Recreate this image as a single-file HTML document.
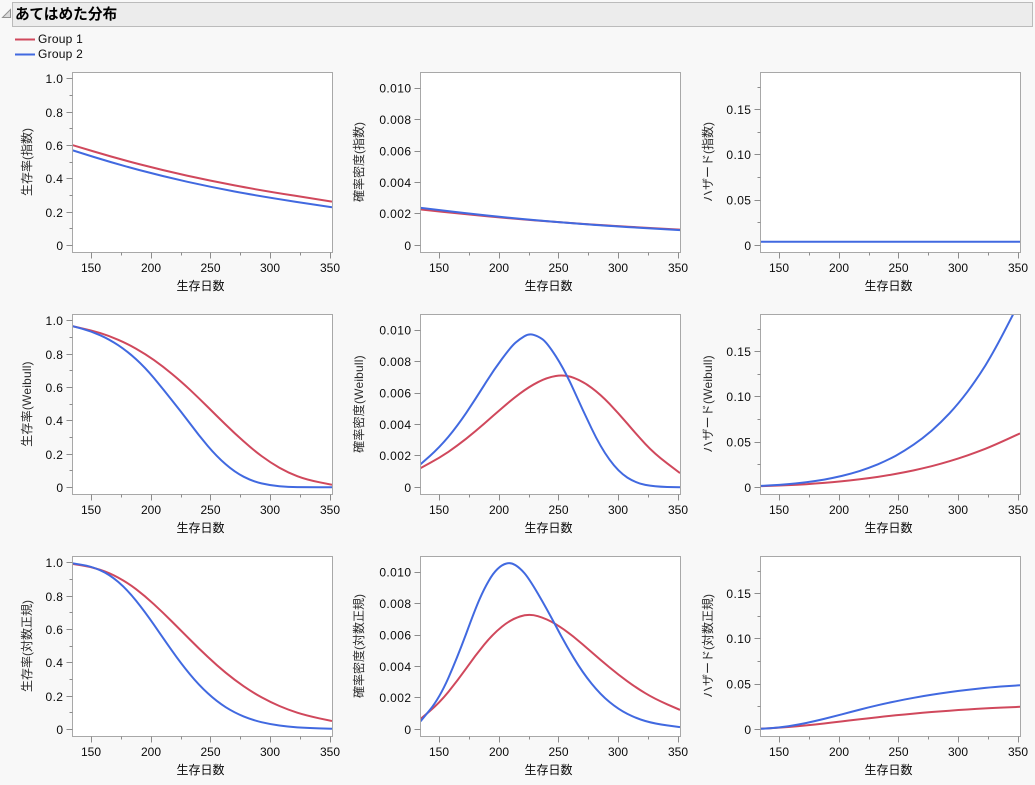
<!DOCTYPE html>
<html lang="ja">
<head>
<meta charset="utf-8">
<title>あてはめた分布</title>
<style>
html,body{margin:0;padding:0;background:#f8f8f8;}
body{width:1035px;height:785px;overflow:hidden;}
svg{display:block;font-family:"Liberation Sans","Noto Sans CJK JP",sans-serif;font-size:12px;fill:#0a0a0a;}
.r{fill:none;stroke:#d0485c;stroke-width:2;stroke-linejoin:round;}
.b{fill:none;stroke:#4169e0;stroke-width:2;stroke-linejoin:round;}
.f{fill:#fff;stroke:#a8a8a8;stroke-width:1;}
.t{stroke:#8c8c8c;stroke-width:1;fill:none;}
.y{text-anchor:end;letter-spacing:.4px;}
.x{text-anchor:middle;}
.v{text-anchor:middle;fill:#2a2a2a;}
.w{letter-spacing:.2px;}
.g{letter-spacing:.25px;}
</style>
</head>
<body>
<svg width="1035" height="785" viewBox="0 0 1035 785" xmlns="http://www.w3.org/2000/svg">
<defs>
<clipPath id="c"><rect x="73" y="73" width="259" height="179"/></clipPath>
<path id="xt" class="t" d="M91.5 252.5v6M151.5 252.5v6M210.5 252.5v6M270.5 252.5v6M330.5 252.5v6M121.5 252.5v3M181.5 252.5v3M240.5 252.5v3M300.5 252.5v3"/>
<path id="y1" class="t" d="M72.5 245.5h-6M72.5 212.5h-6M72.5 178.5h-6M72.5 145.5h-6M72.5 112.5h-6M72.5 78.5h-6M72.5 228.5h-3M72.5 195.5h-3M72.5 162.5h-3M72.5 128.5h-3M72.5 95.5h-3"/>
<path id="y2" class="t" d="M72.5 245.5h-6M72.5 213.5h-6M72.5 182.5h-6M72.5 151.5h-6M72.5 119.5h-6M72.5 88.5h-6"/>
<path id="y3" class="t" d="M72.5 245.5h-6M72.5 200.5h-6M72.5 154.5h-6M72.5 109.5h-6M72.5 222.5h-3M72.5 177.5h-3M72.5 132.5h-3M72.5 87.5h-3"/>
</defs>

<rect x="12.5" y="2.5" width="1020" height="24" fill="#ececec" stroke="#bbb" stroke-width="1"/>
<path d="M10.5 9.5V17.5H2.5Z" fill="#dcdcdc" stroke="#929292" stroke-width="1"/>
<text x="15" y="19" style="font-size:14.7px;font-weight:bold;" fill="#000">あてはめた分布</text>

<path d="M15 39.5H35" class="r"/>
<path d="M15 54.5H35" class="b"/>
<text class="g" x="38" y="43">Group 1</text>
<text class="g" x="38" y="58">Group 2</text>

<!-- Row 1 Col 1 -->
<g>
<rect class="f" x="72.5" y="72.5" width="260" height="180"/>
<use href="#xt"/><use href="#y1"/>
<g clip-path="url(#c)">
<path class="r" d="M72.5 145.1L93.9 151.5Q115.2 157.9 139.1 164.1Q163 170.3 186.9 175.6Q210.7 180.8 234.6 185.4Q258.5 190 295.3 195.8L332 201.6"/>
<path class="b" d="M72.5 150.3L93.9 157Q115.2 163.6 139.1 170Q163 176.3 186.9 181.7Q210.7 187 234.6 191.5Q258.5 196 295.3 201.7L332 207.3"/>
</g>
<text class="y" x="63.4" y="83">1.0</text><text class="y" x="63.4" y="117">0.8</text><text class="y" x="63.4" y="150">0.6</text><text class="y" x="63.4" y="183">0.4</text><text class="y" x="63.4" y="217">0.2</text><text class="y" x="63.4" y="250">0</text>
<text class="x" x="91" y="272">150</text><text class="x" x="151" y="272">200</text><text class="x" x="210.5" y="272">250</text><text class="x" x="270" y="272">300</text><text class="x" x="330" y="272">350</text>
<text class="x" x="200.5" y="290">生存日数</text>
<text class="v" transform="translate(31,162) rotate(-90)">生存率(指数)</text>
</g>

<!-- Row 1 Col 2 -->
<g transform="translate(348,0)">
<rect class="f" x="72.5" y="72.5" width="260" height="180"/>
<use href="#xt"/><use href="#y2"/>
<g clip-path="url(#c)">
<path class="r" d="M72.5 209.5L93.9 211.8Q115.2 214 139.1 216.3Q163 218.5 186.9 220.4Q210.7 222.2 234.6 223.9Q258.5 225.5 295.3 227.6L332 229.6"/>
<path class="b" d="M72.5 207.8L93.9 210.4Q115.2 213 139.1 215.5Q163 218 186.9 220.1Q210.7 222.2 234.6 224Q258.5 225.8 295.3 228L332 230.1"/>
</g>
<text class="y" x="63.4" y="92.5">0.010</text><text class="y" x="63.4" y="124">0.008</text><text class="y" x="63.4" y="155.5">0.006</text><text class="y" x="63.4" y="187">0.004</text><text class="y" x="63.4" y="218">0.002</text><text class="y" x="63.4" y="250">0</text>
<text class="x" x="91" y="272">150</text><text class="x" x="151" y="272">200</text><text class="x" x="210.5" y="272">250</text><text class="x" x="270" y="272">300</text><text class="x" x="330" y="272">350</text>
<text class="x" x="200.5" y="290">生存日数</text>
<text class="v" transform="translate(15,162) rotate(-90)">確率密度(指数)</text>
</g>

<!-- Row 1 Col 3 -->
<g transform="translate(688,0)">
<rect class="f" x="72.5" y="72.5" width="260" height="180"/>
<use href="#xt"/><use href="#y3"/>
<g clip-path="url(#c)">
<path class="b" d="M72.5 241.7H332"/>
</g>
<text class="y" x="63.4" y="114">0.15</text><text class="y" x="63.4" y="159">0.10</text><text class="y" x="63.4" y="204.5">0.05</text><text class="y" x="63.4" y="250">0</text>
<text class="x" x="91" y="272">150</text><text class="x" x="151" y="272">200</text><text class="x" x="210.5" y="272">250</text><text class="x" x="270" y="272">300</text><text class="x" x="330" y="272">350</text>
<text class="x" x="200.5" y="290">生存日数</text>
<text class="v" transform="translate(24,162) rotate(-90)">ハザード(指数)</text>
</g>

<!-- Row 2 Col 1 -->
<g transform="translate(0,242)">
<rect class="f" x="72.5" y="72.5" width="260" height="180"/>
<use href="#xt"/><use href="#y1"/>
<g clip-path="url(#c)">
<path class="r" d="M72.5 84.2L81.9 86.3Q91.3 88.3 100.3 91.1Q109.2 93.9 118.2 97.8Q127.1 101.6 136.1 106.7Q145 111.7 154 118.1Q162.9 124.4 171.9 131.9Q180.9 139.3 189.9 147.7Q198.8 156.1 207.8 165Q216.7 173.9 225.7 182.6Q234.6 191.3 243.6 199.3Q252.5 207.3 261.5 214Q270.4 220.6 279.4 225.7Q288.3 230.7 297.3 234.2Q306.2 237.6 319.1 240.2L332 242.8"/>
<path class="b" d="M72.5 84.1L81.9 86.7Q91.3 89.3 100.3 93.3Q109.2 97.3 118.2 103.2Q127.1 109.1 136.1 117.2Q145 125.3 154 136.1Q162.9 146.9 171.9 158.2Q180.9 169.4 189.9 181.4Q198.8 193.4 207.8 204Q216.7 214.5 225.7 222.3Q234.6 230.1 243.6 234.7Q252.5 239.3 261.5 241.4Q270.4 243.5 279.4 244.2Q288.3 244.9 297.3 245.1Q306.2 245.2 319.1 245.3L332 245.3"/>
</g>
<text class="y" x="63.4" y="83">1.0</text><text class="y" x="63.4" y="117">0.8</text><text class="y" x="63.4" y="150">0.6</text><text class="y" x="63.4" y="183">0.4</text><text class="y" x="63.4" y="217">0.2</text><text class="y" x="63.4" y="250">0</text>
<text class="x" x="91" y="272">150</text><text class="x" x="151" y="272">200</text><text class="x" x="210.5" y="272">250</text><text class="x" x="270" y="272">300</text><text class="x" x="330" y="272">350</text>
<text class="x" x="200.5" y="290">生存日数</text>
<text class="v w" transform="translate(31,162) rotate(-90)">生存率(Weibull)</text>
</g>

<!-- Row 2 Col 2 -->
<g transform="translate(348,242)">
<rect class="f" x="72.5" y="72.5" width="260" height="180"/>
<use href="#xt"/><use href="#y2"/>
<g clip-path="url(#c)">
<path class="r" d="M72.5 226.1L81.9 221Q91.3 215.9 100.3 209.9Q109.2 203.8 118.2 196.7Q127.1 189.5 136.1 181.7Q145 173.8 154 166.1Q162.9 158.3 171.9 151.6Q180.9 144.8 189.9 140.2Q198.8 135.5 207.8 134Q216.7 132.5 225.7 135.8Q234.6 139.1 243.6 145.8Q252.5 152.4 261.5 161.8Q270.4 171.2 279.4 181.7Q288.3 192.2 297.3 201.9Q306.2 211.5 319.1 221.3L332 231.1"/>
<path class="b" d="M72.5 222.3L81.9 214Q91.3 205.6 100.3 194.9Q109.2 184.1 118.2 170.9Q127.1 157.6 136.1 143.3Q145 129 154 116.9Q162.9 104.8 167.4 100.8Q171.9 96.8 176.4 94.2Q180.9 91.6 185.4 92.8Q189.9 94 194.4 97.2Q198.8 100.3 207.8 114.2Q216.7 128.1 225.7 148Q234.6 167.8 243.6 186.5Q252.5 205.2 261.5 217.6Q270.4 229.9 279.4 235.6Q288.3 241.2 297.3 242.9Q306.2 244.6 319.1 245L332 245.3"/>
</g>
<text class="y" x="63.4" y="92.5">0.010</text><text class="y" x="63.4" y="124">0.008</text><text class="y" x="63.4" y="155.5">0.006</text><text class="y" x="63.4" y="187">0.004</text><text class="y" x="63.4" y="218">0.002</text><text class="y" x="63.4" y="250">0</text>
<text class="x" x="91" y="272">150</text><text class="x" x="151" y="272">200</text><text class="x" x="210.5" y="272">250</text><text class="x" x="270" y="272">300</text><text class="x" x="330" y="272">350</text>
<text class="x" x="200.5" y="290">生存日数</text>
<text class="v w" transform="translate(15,162) rotate(-90)">確率密度(Weibull)</text>
</g>

<!-- Row 2 Col 3 -->
<g transform="translate(688,242)">
<rect class="f" x="72.5" y="72.5" width="260" height="180"/>
<use href="#xt"/><use href="#y3"/>
<g clip-path="url(#c)">
<path class="r" d="M72.5 244.2L81.9 243.9Q91.3 243.5 100.3 243.1Q109.2 242.7 118.2 242.2Q127.1 241.6 136.1 240.9Q145 240.2 154 239.3Q162.9 238.4 171.9 237.3Q180.9 236.2 189.9 234.9Q198.8 233.5 207.8 231.9Q216.7 230.3 225.7 228.4Q234.6 226.4 243.6 224.2Q252.5 221.9 261.5 219.2Q270.4 216.5 279.4 213.4Q288.3 210.3 297.3 206.8Q306.2 203.2 319.1 197.3L332 191.4"/>
<path class="b" d="M72.5 243.9L81.9 243.4Q91.3 242.9 100.3 242.1Q109.2 241.3 118.2 240.2Q127.1 239.1 136.1 237.6Q145 236 154 233.9Q162.9 231.7 171.9 228.9Q180.9 226 189.9 222.3Q198.8 218.5 207.8 213.7Q216.7 208.8 225.7 202.6Q234.6 196.4 243.6 188.7Q252.5 180.9 261.5 171.3Q270.4 161.7 279.4 149.8Q288.3 137.9 297.3 123.6Q306.2 109.2 319.1 84.1L332 59"/>
</g>
<text class="y" x="63.4" y="114">0.15</text><text class="y" x="63.4" y="159">0.10</text><text class="y" x="63.4" y="204.5">0.05</text><text class="y" x="63.4" y="250">0</text>
<text class="x" x="91" y="272">150</text><text class="x" x="151" y="272">200</text><text class="x" x="210.5" y="272">250</text><text class="x" x="270" y="272">300</text><text class="x" x="330" y="272">350</text>
<text class="x" x="200.5" y="290">生存日数</text>
<text class="v w" transform="translate(24,162) rotate(-90)">ハザード(Weibull)</text>
</g>

<!-- Row 3 Col 1 -->
<g transform="translate(0,484)">
<rect class="f" x="72.5" y="72.5" width="260" height="180"/>
<use href="#xt"/><use href="#y1"/>
<g clip-path="url(#c)">
<path class="r" d="M72.5 79.9L81.9 81.4Q91.3 82.8 100.3 85.8Q109.2 88.7 118.2 93.6Q127.1 98.4 136.1 105.2Q145 112 154 120.3Q162.9 128.5 171.9 137.5Q180.9 146.5 189.9 155.5Q198.8 164.5 207.8 172.9Q216.7 181.3 225.7 188.7Q234.6 196 243.6 202.2Q252.5 208.3 261.5 213.3Q270.4 218.2 279.4 222Q288.3 225.8 297.3 228.7Q306.2 231.5 319.1 234.3L332 237"/>
<path class="b" d="M72.5 79.3L81.9 80.8Q91.3 82.3 100.3 86.3Q109.2 90.2 118.2 97.9Q127.1 105.5 136.1 116.7Q145 127.8 154 140.8Q162.9 153.8 171.9 166.6Q180.9 179.4 189.9 190.3Q198.8 201.1 207.8 209.3Q216.7 217.5 225.7 223.2Q234.6 228.8 243.6 232.4Q252.5 236 261.5 238.2Q270.4 240.3 279.4 241.5Q288.3 242.7 297.3 243.4Q306.2 244 319.1 244.4L332 244.8"/>
</g>
<text class="y" x="63.4" y="83">1.0</text><text class="y" x="63.4" y="117">0.8</text><text class="y" x="63.4" y="150">0.6</text><text class="y" x="63.4" y="183">0.4</text><text class="y" x="63.4" y="217">0.2</text><text class="y" x="63.4" y="250">0</text>
<text class="x" x="91" y="272">150</text><text class="x" x="151" y="272">200</text><text class="x" x="210.5" y="272">250</text><text class="x" x="270" y="272">300</text><text class="x" x="330" y="272">350</text>
<text class="x" x="200.5" y="290">生存日数</text>
<text class="v" transform="translate(31,162) rotate(-90)">生存率(対数正規)</text>
</g>

<!-- Row 3 Col 2 -->
<g transform="translate(348,484)">
<rect class="f" x="72.5" y="72.5" width="260" height="180"/>
<use href="#xt"/><use href="#y2"/>
<g clip-path="url(#c)">
<path class="r" d="M72.5 235L81.9 227Q91.3 219 100.3 208Q109.2 196.9 118.2 184.4Q127.1 171.8 136.1 160.8Q145 149.8 154 142.6Q162.9 135.4 171.9 132.5Q180.9 129.5 189.9 132.2Q198.8 134.8 207.8 140.2Q216.7 145.6 225.7 152.9Q234.6 160.2 243.6 168.1Q252.5 175.9 261.5 183.4Q270.4 190.8 279.4 197.3Q288.3 203.8 297.3 209.2Q306.2 214.6 319.1 220.3L332 225.9"/>
<path class="b" d="M72.5 237.4L81.9 225.9Q91.3 214.3 100.3 194.1Q109.2 173.8 118.2 149.6Q127.1 125.3 131.6 115.1Q136.1 104.8 140.6 97.1Q145 89.3 149.5 85Q154 80.6 158.5 79.5Q162.9 78.3 167.4 81.1Q171.9 83.9 176.4 89.1Q180.9 94.3 189.9 109.6Q198.8 124.8 207.8 141.9Q216.7 159 225.7 173.8Q234.6 188.6 243.6 199.6Q252.5 210.6 261.5 218Q270.4 225.3 279.4 229.9Q288.3 234.4 297.3 237Q306.2 239.6 319.1 241.4L332 243.1"/>
</g>
<text class="y" x="63.4" y="92.5">0.010</text><text class="y" x="63.4" y="124">0.008</text><text class="y" x="63.4" y="155.5">0.006</text><text class="y" x="63.4" y="187">0.004</text><text class="y" x="63.4" y="218">0.002</text><text class="y" x="63.4" y="250">0</text>
<text class="x" x="91" y="272">150</text><text class="x" x="151" y="272">200</text><text class="x" x="210.5" y="272">250</text><text class="x" x="270" y="272">300</text><text class="x" x="330" y="272">350</text>
<text class="x" x="200.5" y="290">生存日数</text>
<text class="v" transform="translate(15,162) rotate(-90)">確率密度(対数正規)</text>
</g>

<!-- Row 3 Col 3 -->
<g transform="translate(688,484)">
<rect class="f" x="72.5" y="72.5" width="260" height="180"/>
<use href="#xt"/><use href="#y3"/>
<g clip-path="url(#c)">
<path class="r" d="M72.5 244.7L81.9 244.2Q91.3 243.7 100.3 243Q109.2 242.3 118.2 241.4Q127.1 240.5 136.1 239.5Q145 238.4 154 237.4Q162.9 236.3 171.9 235.3Q180.9 234.2 189.9 233.2Q198.8 232.2 207.8 231.3Q216.7 230.4 225.7 229.6Q234.6 228.7 243.6 228Q252.5 227.3 261.5 226.7Q270.4 226 279.4 225.5Q288.3 224.9 297.3 224.4Q306.2 223.9 319.1 223.4L332 222.8"/>
<path class="b" d="M72.5 244.8L81.9 244.2Q91.3 243.5 100.3 242.2Q109.2 240.9 118.2 239Q127.1 237.1 136.1 234.9Q145 232.6 154 230.3Q162.9 227.9 171.9 225.6Q180.9 223.3 189.9 221.2Q198.8 219.1 207.8 217.3Q216.7 215.4 225.7 213.8Q234.6 212.2 243.6 210.8Q252.5 209.3 261.5 208.1Q270.4 206.9 279.4 205.9Q288.3 204.9 297.3 203.9Q306.2 202.9 319.1 202.1L332 201.3"/>
</g>
<text class="y" x="63.4" y="114">0.15</text><text class="y" x="63.4" y="159">0.10</text><text class="y" x="63.4" y="204.5">0.05</text><text class="y" x="63.4" y="250">0</text>
<text class="x" x="91" y="272">150</text><text class="x" x="151" y="272">200</text><text class="x" x="210.5" y="272">250</text><text class="x" x="270" y="272">300</text><text class="x" x="330" y="272">350</text>
<text class="x" x="200.5" y="290">生存日数</text>
<text class="v" transform="translate(24,162) rotate(-90)">ハザード(対数正規)</text>
</g>
</svg>
</body>
</html>
